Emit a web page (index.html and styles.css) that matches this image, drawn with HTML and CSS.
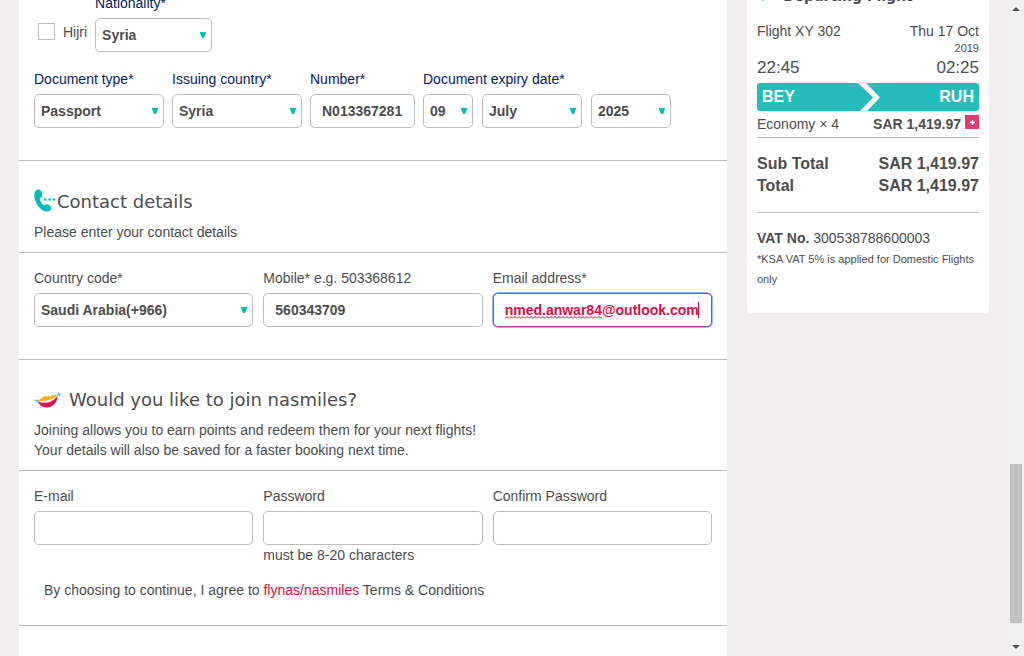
FILE: index.html
```html
<!DOCTYPE html>
<html lang="en">
<head>
<meta charset="utf-8">
<title>Passenger details</title>
<link rel="stylesheet" href="styles.css">
</head>
<body>
<div class="page">
  <main class="form-panel">
    <section class="section document">
      <div class="row">
        <label class="check"><input type="checkbox"> Hijri</label>
        <div class="field w-nationality">
          <label for="nationality">Nationality*</label>
          <select id="nationality"><option>Syria</option></select>
        </div>
      </div>
      <div class="row">
        <div class="field w-type">
          <label for="doc-type">Document type*</label>
          <select id="doc-type"><option>Passport</option></select>
        </div>
        <div class="field w-type">
          <label for="issuing">Issuing country*</label>
          <select id="issuing"><option>Syria</option></select>
        </div>
        <div class="field w-number">
          <label for="number">Number*</label>
          <input id="number" type="text" value="N013367281">
        </div>
        <div class="field">
          <label for="day">Document expiry date*</label>
          <div class="dates">
            <select id="day" class="w-day"><option>09</option></select>
            <select class="w-month" aria-label="Expiry month"><option>July</option></select>
            <select class="w-year" aria-label="Expiry year"><option>2025</option></select>
          </div>
        </div>
      </div>
    </section>

    <section class="section">
      <header class="section-head">
        <h2>
          <svg width="23" height="25" viewBox="0 0 23 25" aria-hidden="true">
            <path fill="#00beb4" d="M2.500 1C4.500-.200 7 .6 7.900 3.800c.6 2.600.1 4.600-2.100 5.400.1 3 1.800 5.600 4.400 7.200 1.700-1.500 3.800-1.500 5.300-.2 1.900 1.800 2.300 3.900.7 5.200-2.700 2-6.500 1.200-9.500-1.600C2.600 16.100.6 11.600.3 7 .2 4.400.9 2.200 2.500 1z"/>
            <g fill="#00beb4"><circle cx="11" cy="10.500" r="1.300"/><circle cx="15.500" cy="10.500" r="1.300"/><circle cx="20" cy="10.500" r="1.300"/></g>
          </svg>
          <span>Contact details</span>
        </h2>
        <p>Please enter your contact details</p>
      </header>
      <div class="grid">
        <div class="field">
          <label for="code">Country code*</label>
          <select id="code"><option>Saudi Arabia(+966)</option></select>
        </div>
        <div class="field">
          <label for="mobile">Mobile* e.g. 503368612</label>
          <input id="mobile" type="text" value="560343709">
        </div>
        <div class="field">
          <label for="contact-email">Email address*</label>
          <div class="active-box">
            <input id="contact-email" class="active" type="text" value="nmed.anwar84@outlook.com" spellcheck="false">
            <svg class="squiggle" width="97" height="3" aria-hidden="true">
              <defs><pattern id="wave" width="4" height="3" patternUnits="userSpaceOnUse"><path d="M0 2.500L2 .5L4 2.500" fill="none" stroke="#f0002c"/></pattern></defs>
              <rect width="97" height="3" fill="url(#wave)"/>
            </svg>
            <span class="caret"></span>
          </div>
        </div>
      </div>
    </section>

    <section class="section">
      <header class="section-head">
        <h2 class="spaced">
          <svg width="27" height="20" viewBox="0 0 27 20" aria-hidden="true">
            <path fill="#f6b21c" d="M3 10.500c3-.5 5-3.500 8-4.500 2-.5 3 .7 5 .2 2-.7 4-1.700 7-1.200-2 3-5 5-9 6-4 .8-8 .7-11-.5z"/>
            <path fill="#fff" d="M6 11c5 .5 11-.5 16-4.500-2 4-5 6-9 6-3 0-5-.5-7-1.500z"/>
            <path fill="#d9134f" d="M3 10.800c3 2 7 2.500 11 1.700 4-1 7-3.500 9.500-6.500.3 6-4.500 11.500-11 11.500-4.500 0-7.500-3-9.500-6.700z"/>
            <path fill="none" stroke="#5cc6c2" stroke-width="1.200" d="M0 10l4.500 1M2 12.500l2-3M22 5.500l5-2M24 2.500l1.500 4"/>
          </svg>
          <span>Would you like to join nasmiles?</span>
        </h2>
        <p>Joining allows you to earn points and redeem them for your next flights!<br>Your details will also be saved for a faster booking next time.</p>
      </header>
      <div class="grid signup">
        <div class="field">
          <label for="email">E-mail</label>
          <input id="email" type="text">
        </div>
        <div class="field">
          <label for="password">Password</label>
          <input id="password" type="password">
          <p>must be 8-20 characters</p>
        </div>
        <div class="field">
          <label for="confirm">Confirm Password</label>
          <input id="confirm" type="password">
        </div>
      </div>
      <p class="terms">By choosing to continue, I agree to <a href="#">flynas</a>/<a href="#">nasmiles</a> Terms &amp; Conditions</p>
    </section>
  </main>

  <aside class="summary">
    <h3>
      <svg width="20" height="16" viewBox="0 0 20 16" aria-hidden="true"><path fill="#23bdba" d="M1 4h5L4 0h2l5 4h6q2 1 0 2h-6l-3 6-3 1 1-7H1z"/></svg>
      <span>Departing Flight</span>
    </h3>
    <div class="line flight"><span>Flight XY 302</span><span class="date">Thu 17 Oct<small>2019</small></span></div>
    <div class="line times"><span>22:45</span><span>02:25</span></div>
    <div class="line route">
      <span>BEY</span>
      <svg width="26" height="28" viewBox="0 0 26 28" aria-hidden="true"><path fill="#fff" d="M4 0h8l14 14.500L13 28H6l13-13.500z"/></svg>
      <span>RUH</span>
    </div>
    <div class="line fare">
      <span>Economy × 4</span>
      <span class="price"><b>SAR 1,419.97</b><button type="button" aria-label="Show fare details"><svg width="5" height="5" viewBox="0 0 6 6"><path fill="#fff" d="M2 0h2v2h2v2H4v2H2V4H0V2h2z"/></svg></button></span>
    </div>
    <div class="totals">
      <div class="line"><span>Sub Total</span><span>SAR 1,419.97</span></div>
      <div class="line"><span>Total</span><span>SAR 1,419.97</span></div>
    </div>
    <p class="vat"><b>VAT No.</b> 300538788600003</p>
    <p class="note">*KSA VAT 5% is applied for Domestic Flights only</p>
  </aside>
</div>

<div class="scrollbar" aria-hidden="true">
  <svg width="16" height="17" viewBox="0 0 16 17"><path fill="#505050" d="M4 11l4-4 4 4z"/></svg>
  <div class="before"></div>
  <div class="thumb"></div>
  <div class="after"></div>
  <svg width="16" height="17" viewBox="0 0 16 17"><path fill="#505050" d="M4 6h8l-4 4z"/></svg>
</div>
</body>
</html>
```
FILE: styles.css
```css
* { box-sizing: border-box; }
html, body { height: 100%; }
body {
  margin: 0;
  display: flex;
  overflow: hidden;
  background: #f0eeef;
  color: #4d4d4d;
  font: 14px/20px "Liberation Sans", Arial, sans-serif;
}
h2, h3, p { margin: 0; }
a { color: #dc0d45; text-decoration: none; }

.page {
  flex: 1;
  min-width: 0;
  display: grid;
  grid-template-columns: minmax(0, 1fr) 242px;
  align-items: start;
  gap: 20px;
  padding: 0 19px;
}
.form-panel { min-height: 100vh; background: #fff; }

.section { border-bottom: 1px solid #bbb; }
.document {
  display: flex;
  flex-direction: column;
  gap: 17px;
  /* The top of this block is scrolled past the window edge. */
  margin-top: -7px;
  padding: 0 15px 32px;
}
.document label { color: #06215f; }
.row { display: flex; gap: 8px; }
.document .check {
  display: flex;
  align-items: center;
  align-self: flex-end;
  gap: 8px;
  height: 34px;
  padding-left: 4px;
  padding-bottom: 7px;
  color: #4d4d4d;
}
.check input {
  appearance: none;
  width: 17px;
  height: 17px;
  margin: 0;
  border: 1px solid #bbb;
}

.field label { display: block; margin-bottom: 5px; }
.field input, .field select {
  display: block;
  width: 100%;
  height: 34px;
  margin: 0;
  padding: 0 11px;
  border: 1px solid #bbb;
  border-radius: 5px;
  background: #fff;
  color: #4d4d4d;
  font: bold 14px/20px "Liberation Sans", Arial, sans-serif;
  outline: 0;
}
.field select {
  appearance: none;
  padding: 0 16px 0 6px;
  background: #fff url("data:image/svg+xml,%3Csvg xmlns='http://www.w3.org/2000/svg' width='6' height='6'%3E%3Cpath fill='%2300beb4' d='M0 0h6v1L4 6H2L0 1z'/%3E%3C/svg%3E") no-repeat right 5px center;
}
.w-nationality { width: 117px; }
.w-type { width: 130px; }
.w-number { width: 105px; }
.dates { display: flex; gap: 9px; }
.field .w-day { width: 50px; }
.field .w-month { width: 100px; }
.field .w-year { width: 80px; }

.section-head { padding: 28px 15px 10px; border-bottom: 1px solid #bbb; }
.section-head h2 {
  display: flex;
  align-items: center;
  margin-bottom: 8px;
  font: 18px/24px "DejaVu Sans", Verdana, sans-serif;
}
.section-head .spaced { gap: 8px; }

.grid {
  display: grid;
  grid-template-columns: repeat(3, minmax(0, 1fr));
  gap: 10px;
  padding: 15px 15px 32px;
}
.signup { padding-bottom: 15px; }
.terms { padding: 0 25px 25px; }

.active-box { position: relative; }
.field .active {
  border-color: #a03fa8;
  color: #dc0d45;
  box-shadow: 0 0 0 1px #8fb8f5;
}
.squiggle { position: absolute; left: 12px; top: 23px; }
.caret {
  position: absolute;
  right: 13px;
  top: 9px;
  width: 1px;
  height: 16px;
  background: #dc0d45;
}

.summary {
  padding: 0 10px 24px;
  border-radius: 0 0 4px 4px;
  background: #fff;
}
.summary h3 {
  display: flex;
  align-items: center;
  gap: 6px;
  margin: -14px 0 15px;
  font: bold 14px/20px "DejaVu Sans", Verdana, sans-serif;
}
.line { display: flex; justify-content: space-between; }
.date { text-align: right; }
.date small { display: block; font-size: 11px; line-height: 14px; }
.times { padding-bottom: 3px; font-size: 17px; line-height: 25px; }
.route {
  padding: 0 5px;
  border-radius: 3px;
  background: #23bdba;
  color: #fff;
  font-size: 16px;
  font-weight: bold;
  line-height: 28px;
}
.fare { padding: 3px 0; border-bottom: 1px solid #bbb; }
.price { display: flex; gap: 4px; }
.price button {
  display: grid;
  place-items: center;
  width: 14px;
  height: 14px;
  margin: 1px 0 0;
  padding: 0;
  border: 0;
  background: #e23a70;
}
.totals {
  padding: 15px 0;
  border-bottom: 1px solid #bbb;
  font-size: 16px;
  font-weight: bold;
  line-height: 22px;
}
.vat { padding-top: 15px; }
.note { padding-top: 1px; font-size: 11px; }

.scrollbar {
  display: flex;
  flex-direction: column;
  width: 16px;
  background: #f1f0f1;
}
.scrollbar svg { flex: none; }
.before { flex: 447; }
.thumb { flex: 159; margin: 0 2px; background: #c1c1c1; }
.after { flex: 16; }
```
